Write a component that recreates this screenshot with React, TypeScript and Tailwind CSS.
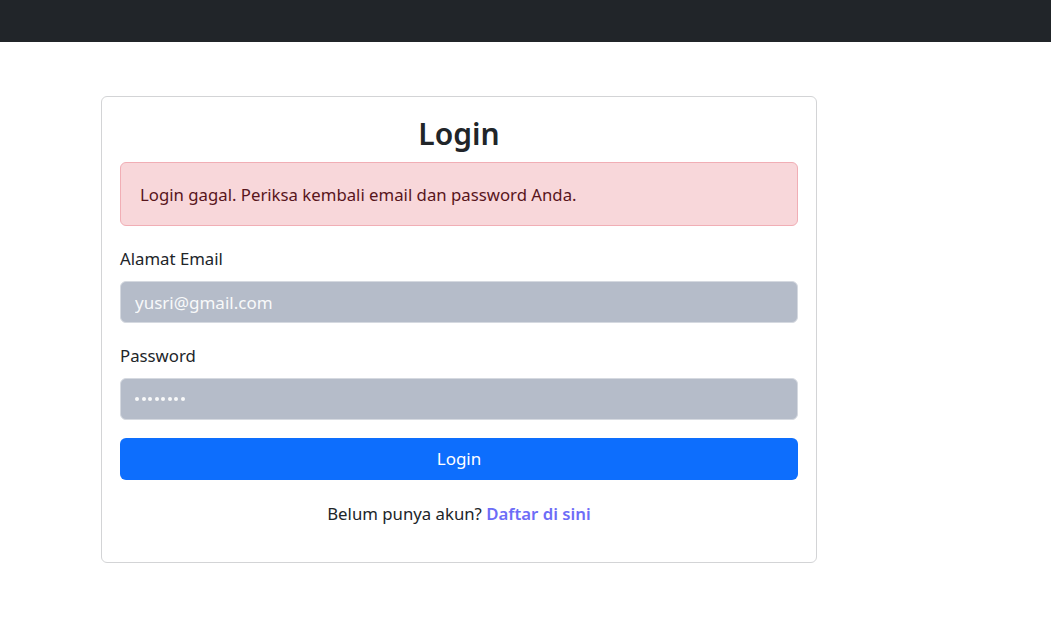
import React from "react";

export default function App() {
  return (
    <div className="min-h-[638px] bg-white" style={{ fontFamily: '"Noto Sans", "Open Sans", sans-serif' }}>
      <div className="h-[42px] bg-[#212529]" />
      <div className="pl-[101px] pt-[54px]">
        <div className="w-[716px] h-[467px] border border-[#d3d4d6] rounded-[6px] px-[18px] flex flex-col">
          <div className="h-[65px] flex items-center justify-center pt-[9px]">
            <h2 className="text-[30px] leading-none font-semibold text-[#212529]">Login</h2>
          </div>
          <div className="h-[64px] bg-[#f8d7da] border border-[#f1aeb5] rounded-[6px] px-[19px] flex items-center text-[16.75px] text-[#58151c] pt-[1px]">
            Login gagal. Periksa kembali email dan password Anda.
          </div>
          <div className="h-[55px] flex items-center text-[16.75px] text-[#212529] pt-[10px]">Alamat Email</div>
          <input
            value="yusri@gmail.com"
            readOnly
            className="h-[42px] w-full bg-[#b5bcc9] border border-[#d5d9e0] rounded-[6px] px-[14px] text-[17px] text-[#f8f9fa] outline-none"
          />
          <div className="h-[55px] flex items-center text-[16.75px] text-[#212529] pt-[10px]">Password</div>
          <div className="h-[42px] w-full bg-[#b5bcc9] border border-[#d5d9e0] rounded-[6px] px-[14px] flex items-center">
            <div className="flex gap-[2.5px]">
              {Array.from({ length: 8 }).map((_, i) => (
                <span key={i} className="w-[4px] h-[4px] rounded-full bg-[#f8f9fa]" />
              ))}
            </div>
          </div>
          <button className="mt-[18px] h-[42px] w-full bg-[#0d6efd] rounded-[6px] text-white text-[17px]">Login</button>
          <div className="mt-[21px] text-center text-[16.75px] text-[#212529]">
            Belum punya akun? <span className="font-semibold text-[#6d6cf7]">Daftar di sini</span>
          </div>
        </div>
      </div>
    </div>
  );
}
